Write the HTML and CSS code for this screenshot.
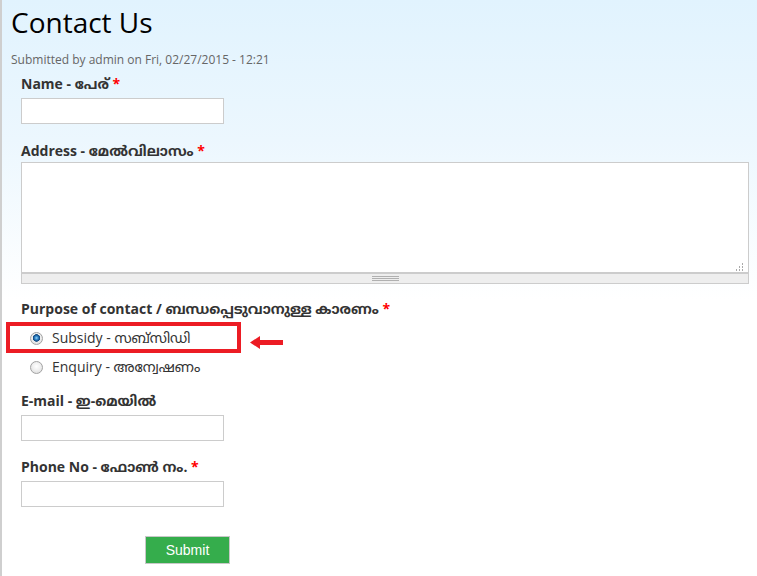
FILE: index.html
```html
<!DOCTYPE html>
<html lang="en">
<head>
<meta charset="utf-8">
<title>Contact Us</title>
<link rel="stylesheet" href="styles.css">
</head>
<body>
<div class="page">
  <h1 class="title">Contact Us</h1>
  <div class="submitted">Submitted by admin on Fri, 02/27/2015 - 12:21</div>
  <form class="webform">
    <div class="item item-name">
      <label class="lbl">Name - പേര് <span class="req">*</span></label>
      <input class="text" type="text">
    </div>
    <div class="item item-address">
      <label class="lbl lbl-tight">Address - മേൽവിലാസം <span class="req">*</span></label>
      <div class="ta-wrap">
        <textarea class="ta"></textarea>
        <svg class="resizer" width="8" height="8" viewBox="0 0 8 8">
          <rect x="6" y="0" width="1" height="2" fill="#aaa"/>
          <rect x="3" y="3" width="1" height="2" fill="#aaa"/>
          <rect x="6" y="3" width="1" height="2" fill="#aaa"/>
          <rect x="0" y="6" width="1" height="2" fill="#aaa"/>
          <rect x="3" y="6" width="1" height="2" fill="#aaa"/>
          <rect x="6" y="6" width="1" height="2" fill="#aaa"/>
        </svg>
        <div class="grippie"></div>
      </div>
    </div>
    <div class="item item-purpose">
      <label class="lbl">Purpose of contact / ബന്ധപ്പെടുവാനുള്ള കാരണം <span class="req">*</span></label>
      <div class="radios">
        <label class="radio-row"><input type="radio" name="p" class="rd" checked> Subsidy - സബ്സിഡി</label>
        <label class="radio-row"><input type="radio" name="p" class="rd"> Enquiry - അന്വേഷണം</label>
      </div>
    </div>
    <div class="item item-email">
      <label class="lbl">E-mail - ഇ-മെയിൽ</label>
      <input class="text" type="text">
    </div>
    <div class="item item-phone">
      <label class="lbl">Phone No - ഫോൺ നം. <span class="req">*</span></label>
      <input class="text" type="text">
    </div>
    <div class="actions">
      <button type="button" class="submit">Submit</button>
    </div>
  </form>
  <div class="annot-box"></div>
  <svg class="annot-arrow" width="34" height="16" viewBox="0 0 34 16">
    <polygon points="0,7.5 10,1 10,5 33,5 33,10 10,10 10,14" fill="#ec1c24"/>
  </svg>
</div>
</body>
</html>
```
FILE: styles.css
```css
html, body {
  margin: 0;
  padding: 0;
}
body {
  background: #fff linear-gradient(to bottom, #e1f3fe 0, #ecf7fe 140px, #ffffff 300px) no-repeat;
  min-height: 576px;
  font-family: "Open Sans", "Noto Sans Malayalam", "Noto Sans", sans-serif;
  color: #333;
}
.page {
  position: relative;
  border-left: 2px solid #cfcfcf;
  min-height: 576px;
  padding-left: 9px;
  padding-top: 4px;
  box-sizing: border-box;
}
.title {
  margin: 0;
  font-size: 28px;
  line-height: 36px;
  font-weight: normal;
  color: #000;
}
.submitted {
  margin-top: 11px;
  font-size: 12px;
  line-height: 18px;
  color: #666;
}
.webform {
  padding-left: 10px;
  margin: 0;
}
.item {
  display: flex;
  flex-direction: column;
  align-items: flex-start;
}
.item-name { margin-top: 5px; }
.item-address { margin-top: 17px; }
.item-purpose { margin-top: 15px; }
.item-email { margin-top: 14px; }
.item-phone { margin-top: 16px; }
.lbl {
  display: block;
  font-size: 14px;
  line-height: 20px;
  font-weight: bold;
  color: #333;
  margin-bottom: 4px;
}
.lbl-tight { margin-bottom: 1px; }
.req { color: #f00; }
.text {
  box-sizing: border-box;
  width: 203px;
  height: 26px;
  border: 1px solid #ccc;
  background: #fff;
  margin: 0;
  padding: 2px 4px;
  font: 14px "Open Sans", sans-serif;
}
.ta-wrap {
  position: relative;
  width: 728px;
}
.ta {
  display: block;
  box-sizing: border-box;
  width: 728px;
  height: 112px;
  margin: 0;
  border: 1px solid #ccc;
  border-bottom-width: 2px;
  background: #fff;
  resize: none;
  font: 14px "Open Sans", sans-serif;
}
.resizer {
  position: absolute;
  right: 5px;
  top: 101px;
}
.grippie {
  box-sizing: border-box;
  height: 10px;
  background-color: #eee;
  border: 1px solid #ccc;
  border-top: 0;
  background-image:
    linear-gradient(#b0b0b0, #b0b0b0),
    linear-gradient(#b0b0b0, #b0b0b0),
    linear-gradient(#b0b0b0, #b0b0b0);
  background-size: 27px 1px, 27px 1px, 27px 1px;
  background-position: center 2px, center 4px, center 6px;
  background-repeat: no-repeat;
}
.radios {
  margin-top: 5px;
  display: flex;
  flex-direction: column;
  gap: 9px;
}
.radio-row {
  display: flex;
  align-items: center;
  gap: 7px;
  height: 20px;
  font-size: 14px;
  line-height: 20px;
  color: #333;
  padding-left: 9px;
}
.rd {
  -webkit-appearance: none;
  appearance: none;
  width: 13px;
  height: 13px;
  margin: 1px 2px 0 0;
  border-radius: 50%;
  border: 1px solid #a2a2a2;
  background: radial-gradient(circle at 50% 40%, #ffffff 0, #f0f0f0 45%, #d6d6d6 100%);
  box-sizing: border-box;
}
.rd:checked {
  background:
    radial-gradient(circle at 50% 45%, #9cd6f5 0, #3a8fd0 1.5px, #14528f 3px, #1c4f80 3.5px, rgba(0,0,0,0) 4px),
    radial-gradient(circle at 50% 40%, #ffffff 0, #f0f0f0 45%, #d6d6d6 100%);
}
.actions {
  margin-top: 29px;
  padding-left: 124px;
}
.submit {
  box-sizing: border-box;
  width: 85px;
  height: 28px;
  margin: 0;
  border: 1px solid #c8c8c8;
  background: #35ad4c;
  color: #fff;
  font: 14px "Liberation Sans", Arial, sans-serif;
  padding: 0;
}
.annot-box {
  position: absolute;
  left: 4px;
  top: 322px;
  width: 235px;
  height: 31px;
  border: 4px solid #ec1c24;
  box-sizing: border-box;
}
.annot-arrow {
  position: absolute;
  left: 248px;
  top: 335px;
}
```
